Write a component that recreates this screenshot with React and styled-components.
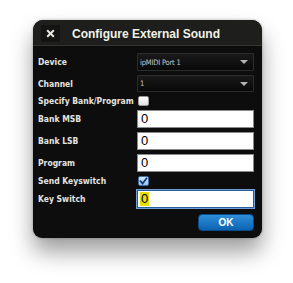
import React from "react";
import styled, { createGlobalStyle } from "styled-components";

const Global = createGlobalStyle`
  html, body { margin: 0; padding: 0; background: #ffffff; }
  body { font-family: "DejaVu Sans", sans-serif; }
`;

const Page = styled.div`
  width: 293px;
  height: 283px;
  padding: 20px 0 0 33px;
  box-sizing: border-box;
`;

const Dialog = styled.div`
  width: 229px;
  height: 218px;
  background: #0d0d0d;
  border-radius: 10px 10px 9px 9px;
  box-shadow: 0 14px 22px rgba(0, 0, 0, 0.38), 0 0 3px rgba(0, 0, 0, 0.3);
  overflow: hidden;
  display: flex;
  flex-direction: column;
`;

const TitleBar = styled.div`
  height: 25px;
  background: #1e1e1c;
  border-bottom: 1px solid #34342f;
  display: flex;
  align-items: center;
  padding-left: 8px;
  gap: 12px;
`;

const CloseBtn = styled.div`
  width: 19px;
  height: 17px;
  background: #141412;
  display: flex;
  align-items: center;
  justify-content: center;
  margin-top: 2px;
`;

const Title = styled.div`
  font-family: "Liberation Sans", Arial, sans-serif;
  font-weight: bold;
  font-size: 12px;
  color: #f2f2e8;
  margin-top: 2px;
`;

const Body = styled.div`
  flex: 1;
  display: grid;
  grid-template-columns: 99px 117px;
  align-content: start;
  row-gap: 4px;
  padding: 7px 0 0 5px;
  align-items: center;
`;

const Label = styled.div`
  font-family: "DejaVu Sans Condensed", "DejaVu Sans", sans-serif;
  font-weight: bold;
  font-size: 8.5px;
  line-height: 10px;
  color: #e4e4e0;
  white-space: nowrap;
`;

const Select = styled.div`
  height: ${(p) => p.h}px;
  box-sizing: border-box;
  background: linear-gradient(#1a1a1a, #080808);
  border: 1px solid #2c2c2c;
  border-radius: 1px;
  display: flex;
  align-items: center;
  justify-content: space-between;
  padding: 0 5px 0 2px;
  font-family: "DejaVu Sans Condensed", "DejaVu Sans", sans-serif;
  font-size: 7.5px;
  letter-spacing: -0.2px;
  color: #c8c8c8;
`;

const Arrow = styled.div`
  width: 0;
  height: 0;
  border-left: 4px solid transparent;
  border-right: 4px solid transparent;
  border-top: 4px solid #b4b4b4;
`;

const Check = styled.div`
  width: 11px;
  height: 10px;
  box-sizing: border-box;
  border-radius: 2px;
  background: ${(p) => (p.checked ? "linear-gradient(#d4e6f8, #9cc4ec)" : "linear-gradient(#ffffff, #e2e2e2)")};
  border: 1px solid ${(p) => (p.checked ? "#3c6ea8" : "#999")};
  display: flex;
  align-items: center;
  justify-content: center;
  margin-left: 1px;
`;

const Input = styled.div`
  height: 18px;
  box-sizing: border-box;
  background: #ffffff;
  border: 1px solid ${(p) => (p.focus ? "#2a5c98" : "#8a8a8a")};
  box-shadow: ${(p) => (p.focus ? "0 0 0 1px #6f9fd6" : "none")};
  display: flex;
  align-items: center;
  padding-left: 2px;
  font-family: "Liberation Sans", Arial, sans-serif;
  font-size: 13px;
  color: #000;
`;

const Sel = styled.span`
  background: ${(p) => (p.on ? "#e6e000" : "transparent")};
  padding: 0 1px;
  line-height: 14px;
`;

const Footer = styled.div`
  grid-column: 1 / 3;
  display: flex;
  justify-content: flex-end;
  padding-top: 2px;
`;

const OkButton = styled.div`
  width: 56px;
  height: 17px;
  border-radius: 4px;
  background: linear-gradient(#2e8fd8, #0b63b2);
  border: 1px solid #084c8c;
  box-sizing: border-box;
  display: flex;
  align-items: center;
  justify-content: center;
  font-family: "Liberation Sans", Arial, sans-serif;
  font-weight: bold;
  font-size: 10px;
  color: #ffffff;
`;

const rows = [
  { label: "Device", kind: "select", value: "ipMIDI Port 1", h: 18 },
  { label: "Channel", kind: "select", value: "1", h: 17 },
  { label: "Specify Bank/Program", kind: "check", checked: false },
  { label: "Bank MSB", kind: "input", value: "0" },
  { label: "Bank LSB", kind: "input", value: "0" },
  { label: "Program", kind: "input", value: "0" },
  { label: "Send Keyswitch", kind: "check", checked: true },
  { label: "Key Switch", kind: "input", value: "0", focus: true },
];

function Control({ row }) {
  if (row.kind === "select")
    return (
      <Select h={row.h}>
        <span>{row.value}</span>
        <Arrow />
      </Select>
    );
  if (row.kind === "check")
    return (
      <Check checked={row.checked}>
        {row.checked && (
          <svg width="9" height="8" viewBox="0 0 9 8">
            <path d="M1 3.5 L3.6 6.5 L8 0.8" fill="none" stroke="#123a7a" strokeWidth="1.8" />
          </svg>
        )}
      </Check>
    );
  return (
    <Input focus={row.focus}>
      <Sel on={row.focus}>{row.value}</Sel>
    </Input>
  );
}

export default function App() {
  return (
    <Page>
      <Global />
      <Dialog>
        <TitleBar>
          <CloseBtn>
            <svg width="9" height="9" viewBox="0 0 9 9">
              <path d="M1.2 1.2 L7.8 7.8 M7.8 1.2 L1.2 7.8" stroke="#e8e8e0" strokeWidth="2" />
            </svg>
          </CloseBtn>
          <Title>Configure External Sound</Title>
        </TitleBar>
        <Body>
          {rows.map((r) => (
            <React.Fragment key={r.label}>
              <Label>{r.label}</Label>
              <Control row={r} />
            </React.Fragment>
          ))}
          <Footer>
            <OkButton>OK</OkButton>
          </Footer>
        </Body>
      </Dialog>
    </Page>
  );
}
